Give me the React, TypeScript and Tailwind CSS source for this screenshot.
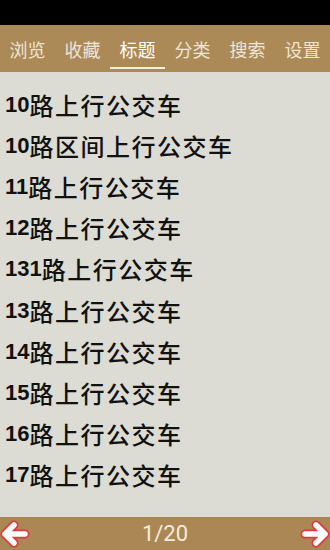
const tabs = ['浏览', '收藏', '标题', '分类', '搜索', '设置'];
const routes = ['10路上行公交车', '10路区间上行公交车', '11路上行公交车', '12路上行公交车', '131路上行公交车', '13路上行公交车', '14路上行公交车', '15路上行公交车', '16路上行公交车', '17路上行公交车'];

function Arrow({ dir }: { dir: 'left' | 'right' }) {
  const d = 'M5 15 L25 15 M14 6 L5 15 L14 24';
  return (
    <svg width="30" height="30" viewBox="0 0 30 30" className={dir === 'right' ? 'scale-x-[-1]' : ''}>
      <path d={d} fill="none" stroke="#e0393e" strokeWidth="9" strokeLinecap="round" strokeLinejoin="round" />
      <path d={d} fill="none" stroke="#ffffff" strokeWidth="5.5" strokeLinecap="round" strokeLinejoin="round" />
    </svg>
  );
}

export default function App() {
  return (
    <div className="w-[330px] h-[550px] flex flex-col bg-[#dcdcd4] overflow-hidden" style={{ fontFamily: '"Noto Sans CJK SC", "Liberation Sans", sans-serif' }}>
      <div className="h-[25px] bg-black shrink-0" />

      <div className="h-[47px] bg-[#ac8a58] flex shrink-0">
        {tabs.map((t, i) => (
          <div key={t} className="flex-1 flex flex-col items-center justify-center relative">
            <span className={`text-[18px] leading-none ${i === 2 ? 'text-white' : 'text-[#ece4d4]'}`}>{t}</span>
            {i === 2 && <div className="absolute bottom-[3px] left-0 right-0 h-[2px] bg-[#f4eee2]" />}
          </div>
        ))}
      </div>

      <div className="flex-1 pt-[12px] pl-[5px]">
        {routes.map((r) => {
          const m = r.match(/^(\d+)(.*)$/)!;
          return (
            <div key={r} className="h-[41.2px] flex items-center leading-none text-[#111111]">
              <span className="font-bold text-[22px]" style={{ fontFamily: '"Liberation Sans", sans-serif' }}>{m[1]}</span>
              <span className="font-medium text-[24px] tracking-[1.5px]">{m[2]}</span>
            </div>
          );
        })}
      </div>

      <div className="h-[33px] bg-[#aa8754] flex items-center justify-between shrink-0">
        <Arrow dir="left" />
        <span className="text-[22px] leading-none text-[#f4ecdc]" style={{ fontFamily: 'Roboto, sans-serif' }}>1/20</span>
        <Arrow dir="right" />
      </div>
    </div>
  );
}
